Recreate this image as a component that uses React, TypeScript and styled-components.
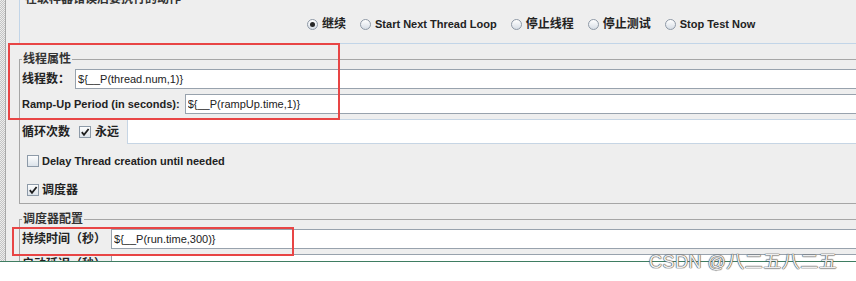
import React from "react";
import styled, { createGlobalStyle } from "styled-components";

const Global = createGlobalStyle`
  html, body { margin: 0; padding: 0; background: #ffffff; }
  body { font-family: "Liberation Sans", "Noto Sans CJK SC", sans-serif; }
  * { box-sizing: border-box; }
`;

const Page = styled.div`
  position: relative;
  width: 856px;
  height: 281px;
  overflow: hidden;
  background: #ffffff;
`;

const Screen = styled.div`
  display: flex;
  height: 262px;
  overflow: hidden;
  background: #eeeeee;
  border-bottom: 1px solid #3f7d62;
`;

const LeftStrip = styled.div`
  flex: 0 0 6px;
  background: repeating-conic-gradient(#c4c4c4 0 25%, #ededed 0 50%) 0 0 / 2px 2px;
  border-right: 1px solid #a9a9a9;
`;

const Main = styled.div`
  flex: 1;
  min-width: 0;
  padding-left: 13px;
  display: flex;
  flex-direction: column;
`;

const TopPanel = styled.section`
  margin: -9px -24px 0 0;
  border-left: 1px solid #c2d5e8;
  border-bottom: 1px solid #c2d5e8;
  padding: 0 0 11px 5px;
`;

const PanelTitle = styled.div`
  font-weight: bold;
  font-size: 12px;
  line-height: 16px;
  height: 16px;
  color: #333;
  white-space: nowrap;
`;

const RadioRow = styled.div`
  display: flex;
  align-items: center;
  height: 16px;
  margin-top: 9px;
  padding-left: 282px;
`;

const RadioOption = styled.label`
  display: flex;
  align-items: center;
  gap: 4px;
  margin-right: 14px;
`;

const RadioDot = styled.span<{ $on?: boolean }>`
  position: relative;
  width: 11px;
  height: 11px;
  border-radius: 50%;
  border: 1px solid #8e99a6;
  background: linear-gradient(#ffffff, #d6dde5);
  &::after {
    content: "";
    display: ${(p) => (p.$on ? "block" : "none")};
    position: absolute;
    left: 2px;
    top: 2px;
    width: 5px;
    height: 5px;
    border-radius: 50%;
    background: #262626;
  }
`;

const Text = styled.span<{ $cjk?: boolean }>`
  font-weight: bold;
  font-size: ${(p) => (p.$cjk ? 12 : 11)}px;
  line-height: 16px;
  color: #222;
  white-space: nowrap;
`;

const Group = styled.fieldset<{ $top: number }>`
  margin: ${(p) => p.$top}px -24px 0 0;
  padding: 0 0 5px 2px;
  border: 1px solid #a6a6a6;
  min-width: 0;
  display: flex;
  flex-direction: column;
`;

const Legend = styled.legend`
  margin: 0;
  padding: 0 1px;
  font-weight: bold;
  font-size: 12px;
  line-height: 14px;
  color: #333;
`;

const Row = styled.div<{ $top: number; $h?: number }>`
  display: flex;
  align-items: center;
  gap: 5px;
  margin-top: ${(p) => p.$top}px;
  height: ${(p) => p.$h ?? 20}px;
  flex: 0 0 auto;
`;

const CheckRow = styled.label<{ $top: number }>`
  display: flex;
  align-items: center;
  gap: 3px;
  height: 16px;
  margin-top: ${(p) => p.$top}px;
  margin-left: 5px;
`;

const Field = styled.input<{ $soft?: boolean }>`
  flex: 1;
  min-width: 0;
  height: 100%;
  margin: 0;
  padding: 0 0 0 2px;
  border: 1px solid ${(p) => (p.$soft ? "#c6d5e4" : "#98a2ad")};
  background: #ffffff;
  font-family: "Liberation Sans", sans-serif;
  font-size: 11px;
  color: #222;
  outline: none;
`;

const BoxWrap = styled.span`
  width: 12px;
  height: 12px;
  border: 1px solid #8d9aa8;
  background: linear-gradient(#fdfdfd, #dce3ea);
  display: inline-flex;
  align-items: center;
  justify-content: center;
  flex: 0 0 auto;
`;

const Inline = styled.span<{ $gap: number }>`
  display: flex;
  align-items: center;
  gap: 4px;
  margin-left: ${(p) => p.$gap}px;
  margin-right: 3px;
`;

const RedBox = styled.div<{ $x: number; $y: number; $w: number; $h: number }>`
  position: absolute;
  left: ${(p) => p.$x}px;
  top: ${(p) => p.$y}px;
  width: ${(p) => p.$w}px;
  height: ${(p) => p.$h}px;
  border: 2px solid #e84545;
  pointer-events: none;
`;

const Watermark = styled.div`
  position: absolute;
  left: 649px;
  top: 251px;
  font-family: "Liberation Sans", "Noto Sans CJK SC", sans-serif;
  font-size: 18px;
  line-height: 22px;
  letter-spacing: 0.5px;
  color: #eeeeee;
  text-shadow: 0 0 1px #4a4a4a, 0 0 1px #4a4a4a, 0 0 1px #4a4a4a;
  white-space: nowrap;
`;

const Check = ({ on }: { on?: boolean }) => (
  <BoxWrap>
    {on && (
      <svg width="10" height="10" viewBox="0 0 10 10">
        <path d="M1.8 5.2 L4 7.8 L8.6 2" fill="none" stroke="#1e1e1e" strokeWidth="1.8" />
      </svg>
    )}
  </BoxWrap>
);

const Radio = ({ on, label, cjk }: { on?: boolean; label: string; cjk?: boolean }) => (
  <RadioOption>
    <RadioDot $on={on} />
    <Text $cjk={cjk}>{label}</Text>
  </RadioOption>
);

export default function App() {
  return (
    <Page>
      <Global />
      <Screen>
        <LeftStrip />
        <Main>
          <TopPanel>
            <PanelTitle>在取样器错误后要执行的动作</PanelTitle>
            <RadioRow>
              <Radio on label="继续" cjk />
              <Radio label="Start Next Thread Loop" />
              <Radio label="停止线程" cjk />
              <Radio label="停止测试" cjk />
              <Radio label="Stop Test Now" />
            </RadioRow>
          </TopPanel>

          <Group $top={8}>
            <Legend>线程属性</Legend>
            <Row $top={3}>
              <Text $cjk>线程数：</Text>
              <Field readOnly defaultValue="${__P(thread.num,1)}" />
            </Row>
            <Row $top={5}>
              <Text>Ramp-Up Period (in seconds):</Text>
              <Field readOnly defaultValue="${__P(rampUp.time,1)}" />
            </Row>
            <Row $top={5} $h={25}>
              <Text $cjk>循环次数</Text>
              <Inline $gap={4}>
                <Check on />
                <Text $cjk>永远</Text>
              </Inline>
              <Field $soft readOnly defaultValue="" />
            </Row>
            <CheckRow $top={9}>
              <Check />
              <Text>Delay Thread creation until needed</Text>
            </CheckRow>
            <CheckRow $top={13}>
              <Check on />
              <Text $cjk>调度器</Text>
            </CheckRow>
          </Group>

          <Group $top={8}>
            <Legend>调度器配置</Legend>
            <Row $top={3}>
              <Text $cjk>持续时间（秒）</Text>
              <Field readOnly defaultValue="${__P(run.time,300)}" />
            </Row>
            <Row $top={5}>
              <Text $cjk>启动延迟（秒）</Text>
              <Field readOnly defaultValue="" />
            </Row>
          </Group>
        </Main>
      </Screen>
      <RedBox $x={8} $y={43} $w={332} $h={77} />
      <RedBox $x={12} $y={227} $w={282} $h={29} />
      <Watermark>CSDN @八二五八二五</Watermark>
    </Page>
  );
}
